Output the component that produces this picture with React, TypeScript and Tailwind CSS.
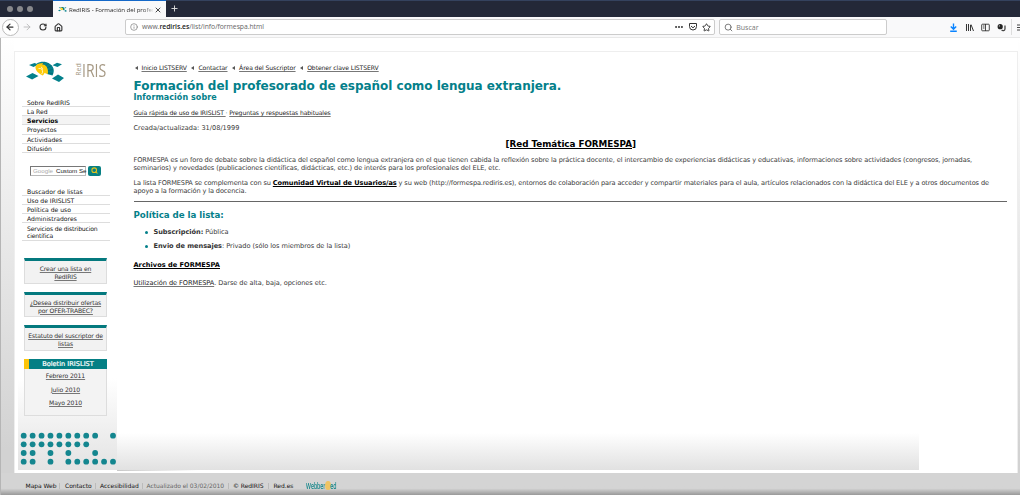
import { ArrowLeft, ArrowRight, Ellipsis, House, Info, Plus, RotateCw, Search, Star, X } from "lucide-react";
import clsx from "clsx";

const mainMenu = ["Sobre RedIRIS", "La Red", "Servicios", "Proyectos", "Actividades", "Difusión"];
const listMenu = ["Buscador de listas", "Uso de IRISLIST", "Política de uso", "Administradores"];
const newsletters = ["Febrero 2011", "Julio 2010", "Mayo 2010"];

const boxes = [
  ["Crear una lista en", "RedIRIS"],
  ["¿Desea distribuir ofertas", "por OFER-TRABEC?"],
  ["Estatuto del suscriptor de", "listas"],
];

const dotRows = [
  [0, 1, 2, 3, 4, 5, 6, 7, 8, 10],
  [0, 1, 2, 3, 4, 5, 6, 7],
  [0, 1, 3, 5, 8],
  [0, 1, 3, 5, 6, 7, 8, 9, 10],
];

const linkClass = "underline decoration-[#777] decoration-[0.5px] underline-offset-[1px]";

function IrisMark({ className }: { className?: string }) {
  return (
    <svg viewBox="0 0 38 22" className={className}>
      <path d="M3 4 8.500 2l4 1.500L7.500 6z M26.500 4.300l4.500-2.500 5 1.500-4.500 2.700z M0 15.500l6.500-3.400 6 3-6.400 3.400z M26 17.500l6-4 6 3.500-5 4z" fill="#04818c" />
      {/* arch, with the yellow strip bending over its front edge */}
      <path d="M10.500 2.500C14 .5 19 .2 22.500 2c5.500 2.800 6.500 8 4 12.500l-5.500-1.500-3-7.500z" fill="#04818c" />
      <path d="M9.500 5.500C10.500 2.500 14.500 1.800 17.500 2.500c-2.500 1.500-3 4-1 6l2 3.500c-.5 1.200-1 2-1.800 2.500C12.500 12.500 9 9.500 9.500 5.500z" fill="#fdcb0b" />
      <path d="M14 3.500c5-1.500 9 3 7.800 9.500l-5.300-1.500c1-3.500 0-6-3-6.500z" fill="#fdcb0b" />
      <path d="M12.500 7.500c3-.5 4.500 1.500 4 4.200l-1 1.500" stroke="#fff" strokeWidth="0.700" fill="none" />
      <path d="M17 3.500 18.500.8 M19.500 5l3-3 M21 7l4.500-2.500 M22 9.500l5-1 M22 12l5 .5" stroke="#0a5860" strokeWidth="0.500" fill="none" />
    </svg>
  );
}

function Browser() {
  return (
    <header className="shrink-0">
      <div className="flex h-[17px] border-t border-[#34425e] bg-[#232838]">
        <div className="flex w-[53px] items-center gap-[4px] pl-[7px]">
          <i className="size-[6px] rounded-full bg-[#87888c]" />
          <i className="size-[6px] rounded-full bg-[#87888c]" />
          <i className="size-[6px] rounded-full bg-[#87888c]" />
        </div>
        <div className="-mt-px flex h-[17px] w-[113px] items-center border-t border-[#1468c8] bg-[#f9f9fa] pl-[5px] pt-px">
          <IrisMark className="h-[7px] w-[9px]" />
          <span className="ml-[2px] w-[84px] whitespace-nowrap bg-gradient-to-r from-[#222] from-88% to-[#ddd] bg-clip-text font-['Open_Sans',sans-serif] text-[6.100px] font-medium leading-[10px] tracking-[-0.040px] text-transparent">
            RedIRIS - Formación del profes
          </span>
          <X className="ml-[1px] size-[8px] text-[#222]" strokeWidth={2.5} />
        </div>
        <Plus className="ml-[4px] mt-[3px] size-[9px] text-[#ddd]" strokeWidth={2.5} />
      </div>
      <div className="flex h-[21px] items-center border-b border-[#e8e8e8] bg-[#f9f9fa] text-[#333]">
        <div className="ml-[2px] flex size-[17px] items-center justify-center rounded-full border border-[#bbb] bg-white">
          <ArrowLeft className="size-[10px]" strokeWidth={3} />
        </div>
        <ArrowRight className="ml-[3px] size-[10px] text-[#b5b5b5]" strokeWidth={2} />
        <RotateCw className="ml-[7px] size-[8px]" strokeWidth={3.2} />
        <House className="ml-[7px] size-[9px]" strokeWidth={3} />
        <div className="ml-[62px] flex h-4 w-[591px] items-center rounded-[2px] border border-[#ccc] bg-white">
          <Info className="ml-[4px] size-[8px] text-[#777]" />
          <span className="ml-[4px] whitespace-nowrap font-['Open_Sans',sans-serif] text-[6.800px] leading-none tracking-[-0.040px] text-[#666]">
            www.<b className="font-semibold text-[#222]">rediris.es</b>/list/info/formespa.html
          </span>
          <Ellipsis className="ml-auto size-[10px]" strokeWidth={3} />
          <svg viewBox="0 0 10 10" className="ml-[4px] size-[10px]" fill="none" stroke="currentColor">
            <path d="M1.500 1.500h7v3a3.500 3.500 0 0 1-7 0z M3 4l2 1.800L7 4" />
          </svg>
          <Star className="ml-[4px] mr-[3px] size-[9px]" strokeWidth={2.5} />
        </div>
        <div className="ml-[4px] flex h-4 w-[168px] items-center rounded-[2px] border border-[#ccc] bg-white">
          <Search className="ml-[4px] size-[9px] text-[#666]" strokeWidth={2.3} />
          <span className="ml-[3px] font-['Open_Sans',sans-serif] text-[7px] leading-none text-[#777]">Buscar</span>
        </div>
        <svg viewBox="0 0 9 9" className="ml-[62px] size-[9px]" fill="none" stroke="#0a84ff" strokeWidth="1.400">
          <path d="M4.500.5v5.500M1.800 3.500l2.700 2.700L7.200 3.500M1.200 8.200h6.600" />
        </svg>
        <svg viewBox="0 0 9 9" className="ml-[7px] size-[9px]" fill="none" stroke="currentColor">
          <path d="M1.500 1v7M3.500 1v7M5.500 2v6M6 1.500 8.500 8" />
        </svg>
        <svg viewBox="0 0 9 9" className="ml-[7px] size-[9px]" fill="none" stroke="currentColor">
          <path d="M1.500 1.200h6q.8 0 .8.800v5q0 .8-.8.800h-6q-.8 0-.8-.8v-5q0-.8.8-.8zM4.500 1v7M2 3h1.500M2 5h1.500" strokeWidth="0.900" />
        </svg>
        <svg viewBox="0 0 9 9" className="ml-[7px] size-[9px]">
          <circle cx="3.200" cy="3.700" r="2.600" fill="#222" />
          <circle cx="2.400" cy="2.900" r="0.700" fill="#bbb" />
          <path d="M8 2.500V6a1.800 1.800 0 0 1-3.300.8" fill="none" stroke="#444" strokeWidth="1.300" />
        </svg>
        <i className="ml-[5px] h-4 w-px bg-[#ddd]" />
        <svg viewBox="0 0 3 9" className="ml-[5px] h-[9px] w-[3px]" stroke="#444">
          <path d="M0 2h3M0 4.500h3M0 7h3" />
        </svg>
      </div>
    </header>
  );
}

function Sidebar() {
  return (
    <aside className="flex w-[99px] shrink-0 flex-col bg-gradient-to-b from-white from-78% to-[#e3e3e3] text-[6.100px] text-[#111]">
      <div className="mt-[9px] flex h-[22px] pl-[8px]">
        <IrisMark className="h-[22px] w-[38px]" />
        <span className="ml-[10.500px] flex h-[17px] items-center text-[#a59883]">
          <span className="w-[7px] -rotate-90 font-['Open_Sans',sans-serif] text-[7px] leading-[7px]">
            <span className="-ml-[4px] block w-[15px] text-center">Red</span>
          </span>
          <span className="origin-left scale-x-[.78] font-['Open_Sans',sans-serif] text-[18px] leading-none">IRIS</span>
        </span>
      </div>
      <ul className="ml-[4px] mt-[15px] w-[88px]">
        {mainMenu.map((item) => (
          <li
            key={item}
            className={clsx(
              "h-[9.150px] whitespace-nowrap border-b border-[#ddd] pl-[5px] leading-[9px]",
              item === "Servicios" && "bg-[#f4f4f4] font-bold text-black"
            )}
          >
            {item}
          </li>
        ))}
      </ul>
      <div className="ml-[12px] mt-[13px] flex h-[10px] items-center">
        <div className="h-[10px] w-[56px] whitespace-nowrap border border-[#bbb] border-l-[#777] border-t-[#777] bg-white pl-[2px] font-['Liberation_Sans',sans-serif] text-[6.200px] leading-[8px]">
          <span className="text-[#aaa]">Google</span>
          <span className="ml-[3px] text-[#222]">Custom Se</span>
        </div>
        <div className="ml-[2px] flex h-[10px] w-[13px] items-center justify-center rounded-[2px] bg-[#078084]">
          <Search className="size-[7px] text-[#e3c31a]" strokeWidth={3.5} />
        </div>
      </div>
      <ul className="ml-[4px] mt-[11px] w-[88px]">
        {listMenu.map((item) => (
          <li key={item} className="h-[9.150px] whitespace-nowrap border-b border-[#ddd] pl-[5px] leading-[9px]">
            {item}
          </li>
        ))}
        <li className="h-[17.500px] whitespace-nowrap border-b border-[#ddd] pl-[5px] pt-[1.500px] leading-[7.500px] tracking-[-0.160px]">
          Servicios de distribucion
          <br />
          científica
        </li>
      </ul>
      <div className="ml-[6px] mt-[17.500px] flex w-[83px] flex-col gap-[8px] text-center text-[#333]">
        {boxes.map(([first, second]) => (
          <div key={first} className="h-[25.500px] whitespace-nowrap border border-t-[3px] border-[#ddd] border-t-[#04797e] bg-[#f2f2f2] pt-[4px] leading-[7.600px] tracking-[-0.150px]">
            <a className={linkClass}>
              {first}
              <br />
              {second}
            </a>
          </div>
        ))}
        <div className="h-[57px] border border-t-0 border-[#ddd] bg-[#f3f3f3]">
          <h3 className="-mx-px h-[10px] border-l-[5px] border-[#fdc50b] bg-[#047f84] text-[6.600px] leading-[11px] text-white [-webkit-text-stroke:0.2px_white]">Boletin IRISLIST</h3>
          {newsletters.map((item) => (
            <p key={item} className="mb-[3px] mt-[2.500px] h-[10.300px] leading-[9px] tracking-[-0.100px]">
              <a className={linkClass}>{item}</a>
            </p>
          ))}
        </div>
      </div>
      <svg viewBox="0 0 99 40" className="mt-auto h-[40px] w-[99px]">
        {dotRows.map((cols, row) =>
          cols.map((col) => <circle key={`${row}-${col}`} cx={5.7 + col * 8.93} cy={5.7 + row * 8.66} r="2.900" fill="#14868f" />)
        )}
      </svg>
    </aside>
  );
}

function Content() {
  return (
    <main className="flex min-w-0 flex-1 flex-col">
      <article className="flex-1 whitespace-nowrap pl-[16.500px] text-[6.600px] tracking-[-0.040px] text-[#3a3a3a]">
        <nav className="ml-[1px] mt-[11px] flex h-[9px] items-center gap-[4.600px] text-[6.100px] leading-[9px] tracking-[-0.090px] text-[#222]">
          {["Inicio LISTSERV", "Contactar", "Área del Suscriptor", "Obtener clave LISTSERV"].map((item) => (
            <span key={item} className="flex items-center gap-[4px]">
              <svg viewBox="0 0 3 4" className="h-[4px] w-[3px]"><path d="M3 0v4L0 2z" fill="#555" /></svg>
              <a className={linkClass}>{item}</a>
            </span>
          ))}
        </nav>
        <h1 className="mt-[6.500px] h-[14px] text-[12px] font-bold leading-[14px] tracking-[-0.030px] text-[#04808a]">Formación del profesorado de español como lengua extranjera.</h1>
        <h2 className="h-[9px] text-[8px] font-bold leading-[9px] tracking-[0.060px] text-[#04808a]">Información sobre</h2>
        <p className="mt-[6.500px] h-[9px] text-[6.100px] leading-[9px] tracking-[-0.110px] text-[#222]">
          <a className={linkClass}>Guía rápida de uso de IRISLIST </a>
          <span className="text-[#04808a]">· </span>
          <a className={linkClass}>Preguntas y respuestas habituales</a>
        </p>
        <p className="mt-[7px] h-[9px] leading-[9px] tracking-normal">Creada/actualizada: 31/08/1999</p>
        <h3 className="mr-[9px] mt-[5.500px] h-[11px] text-center text-[8.800px] font-bold leading-[11px] text-black underline decoration-1 underline-offset-1">[Red Temática FORMESPA]</h3>
        <p className="mt-[6px] leading-[8.500px] tracking-[-0.088px]">
          FORMESPA es un foro de debate sobre la didáctica del español como lengua extranjera en el que tienen cabida la reflexión sobre la práctica docente, el intercambio de experiencias didácticas y educativas, informaciones sobre actividades (congresos, jornadas,
          <br />
          seminarios) y novedades (publicaciones científicas, didácticas, etc.) de interés para los profesionales del ELE, etc.
        </p>
        <p className="mt-[6px] leading-[8.500px] tracking-[-0.122px]">
          La lista FORMESPA se complementa con su <b className="tracking-[-0.070px] text-black underline underline-offset-1">Comunidad Virtual de Usuarios/as</b> y su web (http://formespa.rediris.es), entornos de colaboración para acceder y compartir materiales para el aula, artículos relacionados con la didáctica del ELE y a otros documentos de
          <br />
          apoyo a la formación y la docencia.
        </p>
        <hr className="mr-[10px] mt-[5px] border-[#666]" />
        <h3 className="mt-[8px] h-[11px] text-[8.700px] font-bold leading-[11px] text-[#04808a]">Política de la lista:</h3>
        <ul className="mt-[7px] pl-[11.500px]">
          <li className="flex h-[14.700px] items-start leading-[9px]">
            <i className="mr-[5.500px] mt-[3px] size-[3px] rounded-full bg-[#04808a]" />
            <b className="mr-[2px] text-[#333]">Subscripción:</b> Pública
          </li>
          <li className="flex h-[14.700px] items-start leading-[9px]">
            <i className="mr-[5.500px] mt-[3px] size-[3px] rounded-full bg-[#04808a]" />
            <b className="text-[#333]">Envio de mensajes</b><span className="mr-[2px]">:</span> Privado (sólo los miembros de la lista)
          </li>
        </ul>
        <p className="mt-[4px] h-[9px] leading-[9px] tracking-[0.020px]"><b className="text-black underline underline-offset-1">Archivos de FORMESPA</b></p>
        <p className="mt-[9.500px] h-[9px] leading-[9px] tracking-[-0.060px]"><a className={clsx(linkClass, "text-[#222]")}>Utilización de FORMESPA</a>. Darse de alta, baja, opciones etc.</p>
      </article>
      <div className="h-[37px] w-[802px] bg-gradient-to-b from-white to-[#e1e1e1]" />
      <div className="-mb-px h-px w-[80px] bg-gradient-to-r from-[#c8c8c8] to-white" />
    </main>
  );
}

function Footer() {
  return (
    <footer className="flex h-[22px] shrink-0 items-center whitespace-nowrap bg-gradient-to-b from-[#d4d4d4] from-70% to-[#999] pl-[24.500px] pt-[3px] text-[6px] leading-[9px] tracking-[-0.040px] text-[#111] [&>span]:h-[6px] [&>span]:leading-[6px]">
      <span className="w-[34.500px] border-r border-[#bbb]">Mapa Web</span>
      <span className="ml-[5px] w-[31px] border-r border-[#bbb]">Contacto</span>
      <span className="ml-[4px] w-[42.500px] border-r border-[#bbb]">Accesibilidad</span>
      <span className="ml-[4px] w-[82px] border-r border-[#bbb] text-[#666]">Actualizado el 03/02/2010</span>
      <span className="ml-[4.500px] w-[36px] border-r border-[#bbb]">© RedIRIS</span>
      <span className="ml-[4.500px]">Red.es</span>
      <span className="ml-[13px] flex origin-left scale-x-[.58] items-center font-['Open_Sans',sans-serif] text-[9px] font-semibold text-[#16868a]">
        Webber<i className="-mx-[1px] h-[9px] w-[10px] shrink-0 rounded-full bg-[#efc464]" />ed
      </span>
    </footer>
  );
}

export default function App() {
  return (
    <div className="flex h-[495px] w-[1020px] flex-col overflow-hidden bg-white font-['DejaVu_Sans',Verdana,sans-serif]">
      <Browser />
      <div className="flex min-h-0 flex-1 flex-col border-l border-[#b5b5b5] bg-gradient-to-b from-white to-[#d2d2d2] to-90%">
        <div className="ml-[13px] mr-[2px] flex min-h-0 flex-1 flex-col bg-white pt-[13px]">
          <div className="flex min-h-0 flex-1 border-l border-r border-t border-[#eee] pb-[3px] pl-[3px]">
            <Sidebar />
            <Content />
          </div>
        </div>
        <Footer />
      </div>
    </div>
  );
}
